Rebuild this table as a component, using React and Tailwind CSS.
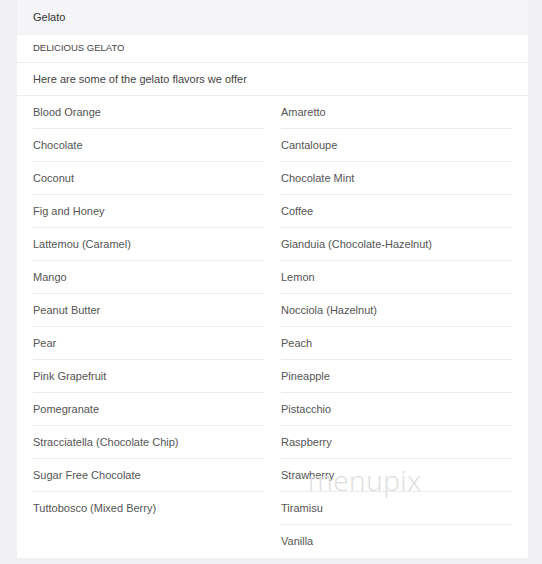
const leftFlavors = [
  "Blood Orange",
  "Chocolate",
  "Coconut",
  "Fig and Honey",
  "Lattemou (Caramel)",
  "Mango",
  "Peanut Butter",
  "Pear",
  "Pink Grapefruit",
  "Pomegranate",
  "Stracciatella (Chocolate Chip)",
  "Sugar Free Chocolate",
  "Tuttobosco (Mixed Berry)",
];

const rightFlavors = [
  "Amaretto",
  "Cantaloupe",
  "Chocolate Mint",
  "Coffee",
  "Gianduia (Chocolate-Hazelnut)",
  "Lemon",
  "Nocciola (Hazelnut)",
  "Peach",
  "Pineapple",
  "Pistacchio",
  "Raspberry",
  "Strawberry",
  "Tiramisu",
  "Vanilla",
];

function FlavorColumn({ items }) {
  return (
    <ul>
      {items.map((name, i) => (
        <li
          key={name}
          className={`h-[33px] flex items-center ${
            i < items.length - 1 ? "border-b border-[#ececec]" : ""
          }`}
        >
          {name}
        </li>
      ))}
    </ul>
  );
}

export default function App() {
  return (
    <div
      className="min-h-[564px] bg-[#f0f0f4] px-[17px] pr-[14px] text-[11px] text-[#555]"
      style={{ fontFamily: '"Liberation Sans", Arial, sans-serif' }}
    >
      <div className="relative bg-white">
        <div className="h-[35px] flex items-center px-4 bg-[#f5f5f8] text-[#333] border-b border-[#eee]">
          Gelato
        </div>
        <div className="h-[28px] flex items-center px-4 text-[9.5px] text-[#444] border-b border-[#eee]">
          DELICIOUS GELATO
        </div>
        <div className="h-[33px] flex items-center px-4 text-[#444] border-b border-[#eee]">
          Here are some of the gelato flavors we offer
        </div>
        <div className="grid grid-cols-2 gap-x-[17px] px-4">
          <FlavorColumn items={leftFlavors} />
          <FlavorColumn items={rightFlavors} />
        </div>
        <div
          className="pointer-events-none absolute left-[291px] top-[466px] text-[28px] font-light tracking-[0.5px] text-[#dedede] leading-none"
          style={{ fontFamily: '"Open Sans", sans-serif' }}
        >
          menupix
        </div>
      </div>
    </div>
  );
}
